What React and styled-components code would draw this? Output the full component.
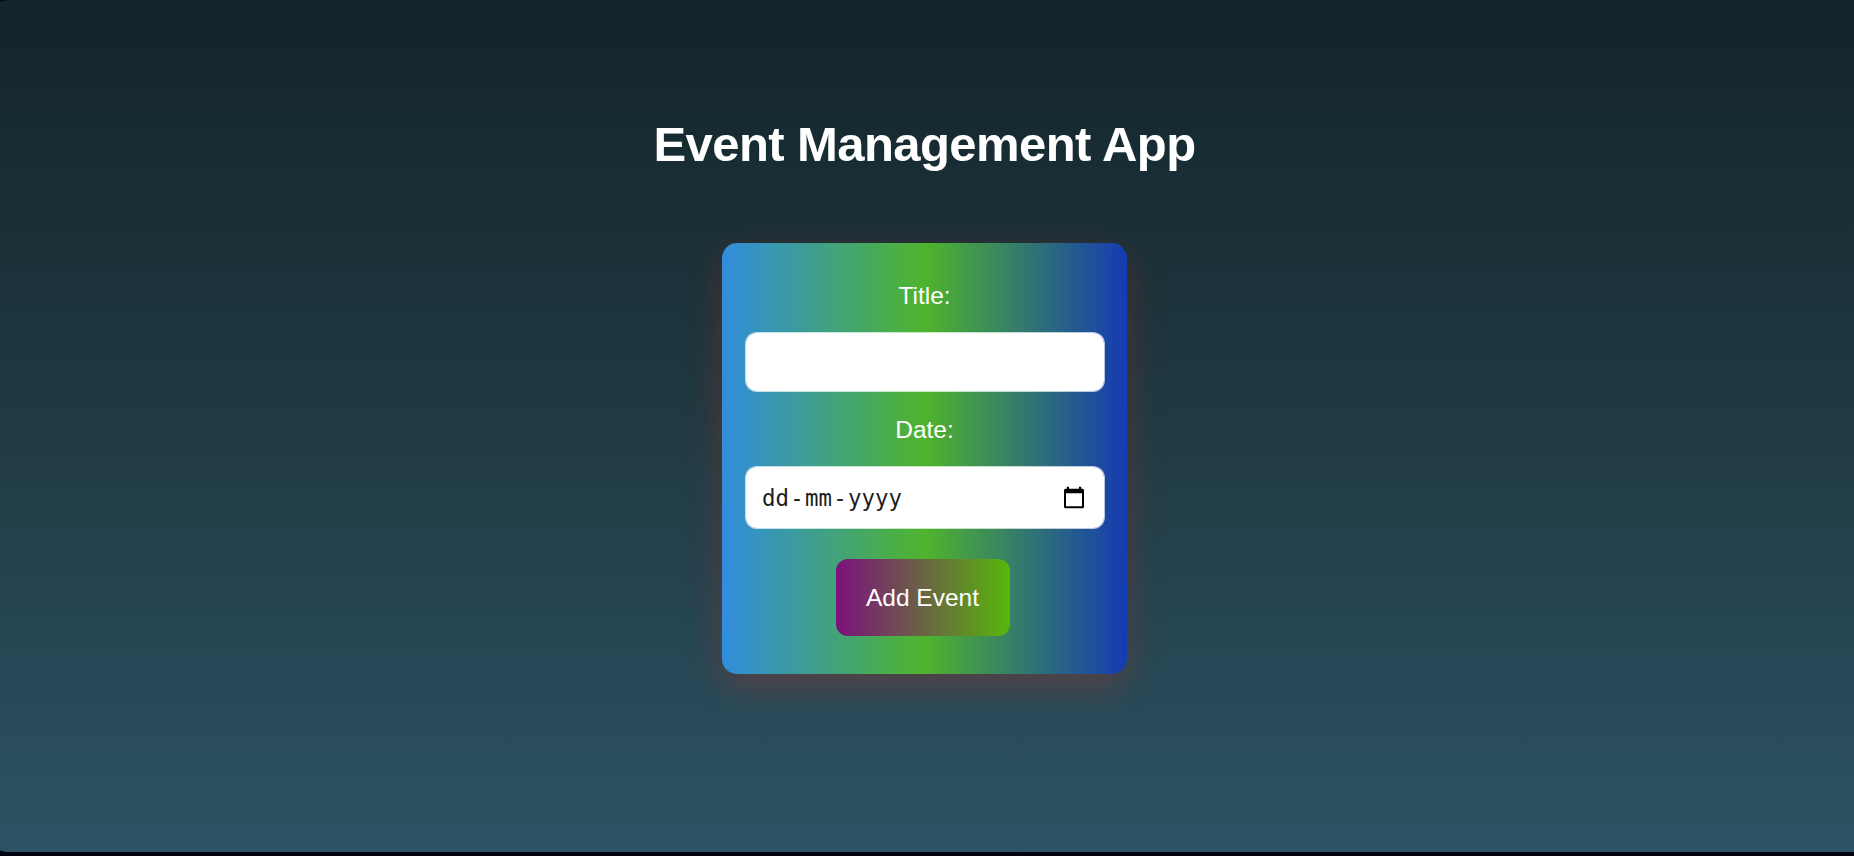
import React from 'react';
import styled, { createGlobalStyle } from 'styled-components';

const GlobalStyle = createGlobalStyle`
  * { box-sizing: border-box; }
  body { margin: 0; background: #00030f; font-family: "Liberation Sans", Arial, sans-serif; }
`;

const Page = styled.main`
  height: 852px;
  margin-bottom: 4px;
  display: flex;
  flex-direction: column;
  align-items: center;
  padding: 116px 5px 0 0;
  border-radius: 12px 0 0 12px / 2px 0 0 2px;
  background: linear-gradient(to bottom, #13242a, #203a43 50%, #2c5364);
`;

const Heading = styled.h1`
  margin: 0 0 71px;
  font-size: 49px;
  line-height: 56px;
  letter-spacing: -0.58px;
  color: #fff;
  white-space: nowrap;
`;

const Card = styled.form`
  width: 405px;
  height: 431px;
  display: flex;
  flex-direction: column;
  align-items: center;
  padding: 39px 22px 0 23px;
  border-radius: 15px;
  background: linear-gradient(to right, #318ddd, #4fb42d 50%, #153bb3);
  box-shadow: 0 12px 36px rgba(255, 38, 0, 0.23);
`;

const Label = styled.label`
  font-size: 24.5px;
  line-height: 28px;
  margin: 0 1px 22px 0;
  color: #fff;
`;

const fieldBox = `
  width: 360px;
  flex: none;
  border: 1px solid rgba(255, 255, 255, 0.7);
  border-radius: 12px;
  background: #fff;
  background-clip: padding-box;
`;

const TextField = styled.input`
  ${fieldBox}
  height: 60px;
  margin-bottom: 24px;
  padding: 0 16px;
  font-size: 24.5px;
  outline: none;
`;

const DateField = styled.div`
  ${fieldBox}
  height: 63px;
  display: flex;
  align-items: center;
  justify-content: space-between;
  padding: 0 19px 0 16px;
`;

const DateText = styled.span`
  display: flex;
  gap: 1.3px;
  font-family: "DejaVu Sans Mono", monospace;
  font-size: 22.4px;
  line-height: 28px;
  color: #1c1c1c;
`;

const CalendarIcon = styled.svg`
  width: 22px;
  height: 24px;
`;

const AddButton = styled.button`
  width: 174px;
  height: 77px;
  flex: none;
  margin: 30px 5px 0 0;
  padding: 0;
  border: 0;
  border-radius: 12px;
  background: linear-gradient(to right, #7d107c, #58b70b);
  color: #fff;
  font-family: inherit;
  font-size: 24.5px;
`;

export default function App() {
  return (
    <>
      <GlobalStyle />
      <Page>
        <Heading>Event Management App</Heading>
        <Card>
          <Label htmlFor="title">Title:</Label>
          <TextField id="title" />
          <Label>Date:</Label>
          <DateField>
            <DateText>
              <span>dd</span><span>-</span><span>mm</span><span>-</span><span>yyyy</span>
            </DateText>
            <CalendarIcon viewBox="0 0 22 24" aria-hidden="true">
              <path
                fillRule="evenodd"
                d="M3.800 0.800h2.200v2h10v-2h2.200v2h1.300a1.500 1.500 0 0 1 1.500 1.500v16.500a1.500 1.500 0 0 1-1.500 1.500H2.500a1.500 1.500 0 0 1-1.500-1.500V4.300a1.500 1.500 0 0 1 1.500-1.500h1.300zM3 7.300v13h16v-13z"
              />
            </CalendarIcon>
          </DateField>
          <AddButton type="button">Add Event</AddButton>
        </Card>
      </Page>
    </>
  );
}
